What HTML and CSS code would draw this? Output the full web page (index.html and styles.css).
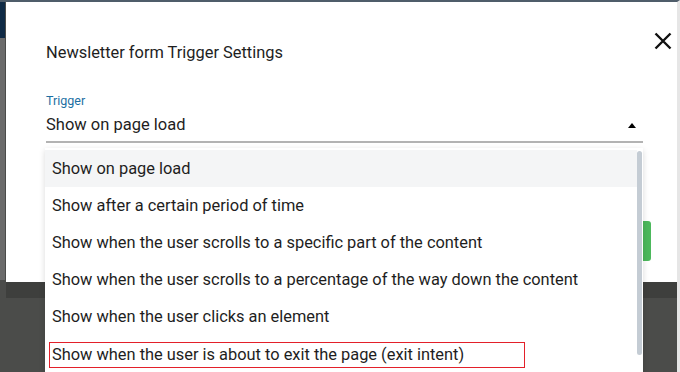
FILE: index.html
```html
<!DOCTYPE html>
<html lang="en">
<head>
    <meta charset="UTF-8">
    <meta name="viewport" content="width=device-width, initial-scale=1.0">
    <title>Newsletter form Trigger Settings</title>
    <link rel="stylesheet" href="styles.css">
</head>
<body>
    <div class="modal">
        <div class="modal-header">
            <h2 class="modal-title">Newsletter form Trigger Settings</h2>
            <button class="close-btn" aria-label="Close">
                <svg width="18" height="18" viewBox="0 0 18 18">
                    <path d="M1.5 1.5 L16.5 16.5 M16.5 1.5 L1.5 16.5" stroke="#111" stroke-width="2.4" fill="none"/>
                </svg>
            </button>
        </div>

        <!-- Trigger select -->
        <div class="field">
            <label class="field-label">Trigger</label>
            <div class="select-box">
                <span class="select-value">Show on page load</span>
                <span class="select-arrow"></span>
            </div>
        </div>

        <div class="modal-footer">
            <button class="save-btn">Save</button>
        </div>

        <!-- Open dropdown menu -->
        <div class="dropdown">
            <ul class="dropdown-list">
                <li class="option active">Show on page load</li>
                <li class="option">Show after a certain period of time</li>
                <li class="option">Show when the user scrolls to a specific part of the content</li>
                <li class="option">Show when the user scrolls to a percentage of the way down the content</li>
                <li class="option">Show when the user clicks an element</li>
                <li class="option option-marked"><span class="marked">Show when the user is about to exit the page (exit intent)</span></li>
            </ul>
            <div class="scroll-track">
                <div class="scroll-thumb"></div>
            </div>
        </div>
    </div>
</body>
</html>
```

FILE: styles.css
```css
html, body {
    height: 372px;
    overflow: hidden;
}

body {
    margin: 0;
    padding: 0 0 0 6px;
    border-top: 2px solid #4f5d6a;
    border-right: 3px solid #e6e6e6;
    font-family: Roboto, "Liberation Sans", sans-serif;
    color: #212121;
    background:
        linear-gradient(#0f2a45, #0f2a45) 0 0 / 5px 38px no-repeat,
        linear-gradient(#6b6b6b, #6b6b6b) 0 38px / 5px 242px no-repeat,
        #4b4c4a;
}

.modal {
    position: relative;
    width: 631px;
    height: 250px;
    padding: 30px 0 0 40px;
    background: #ffffff;
    box-shadow: 0 16px 0 #3e3f3d;
}

.modal-header {
    display: flex;
    justify-content: space-between;
    align-items: flex-start;
}

.modal-title {
    margin: 11px 0 0 0;
    font-size: 16.4px;
    font-weight: 400;
    line-height: 20px;
    color: #1e1e1e;
}

.close-btn {
    margin-right: 5px;
    padding: 0;
    width: 18px;
    height: 18px;
    border: none;
    background: none;
    cursor: pointer;
}

.close-btn svg {
    display: block;
}

.field {
    width: 597px;
    margin-top: 30px;
}

.field-label {
    display: block;
    font-size: 12.5px;
    line-height: 16px;
    color: #1c6fa3;
}

.select-box {
    display: flex;
    justify-content: space-between;
    align-items: center;
    margin-top: 4px;
    padding-bottom: 4px;
    border-bottom: 2px solid #b3b3b3;
}

.select-value {
    font-size: 16.5px;
    line-height: 24px;
    color: #1e1e1e;
}

.select-arrow {
    margin-right: 7px;
    width: 0;
    height: 0;
    border-left: 4px solid transparent;
    border-right: 4px solid transparent;
    border-bottom: 5px solid #000000;
}

.modal-footer {
    display: flex;
    justify-content: flex-end;
    margin-top: 78px;
    padding-right: 26px;
}

.save-btn {
    width: 90px;
    height: 40px;
    border: none;
    border-radius: 3px;
    background-color: #4cb85c;
    color: #ffffff;
}

.dropdown {
    position: absolute;
    top: 146px;
    left: 39px;
    z-index: 2;
    display: flex;
    width: 598px;
    height: 240px;
    padding-top: 2px;
    background: #ffffff;
    box-shadow: 0 2px 6px rgba(0, 0, 0, 0.15);
}

.dropdown-list {
    flex: 1;
    margin: 0;
    padding: 0;
    list-style: none;
}

.option {
    height: 37px;
    padding-left: 7px;
    font-size: 16.4px;
    line-height: 37px;
    color: #1e1e1e;
    white-space: nowrap;
}

.option.active {
    background-color: #f4f5f6;
}

.option-marked {
    padding-left: 4px;
}

.marked {
    display: inline-block;
    width: 470px;
    padding: 0 2px;
    line-height: 24px;
    border: 1px solid #e3202a;
    vertical-align: middle;
}

.scroll-track {
    width: 6px;
    padding-top: 1px;
}

.scroll-thumb {
    width: 5px;
    height: 204px;
    border-radius: 3px;
    background-color: #c4ccd4;
}
```
